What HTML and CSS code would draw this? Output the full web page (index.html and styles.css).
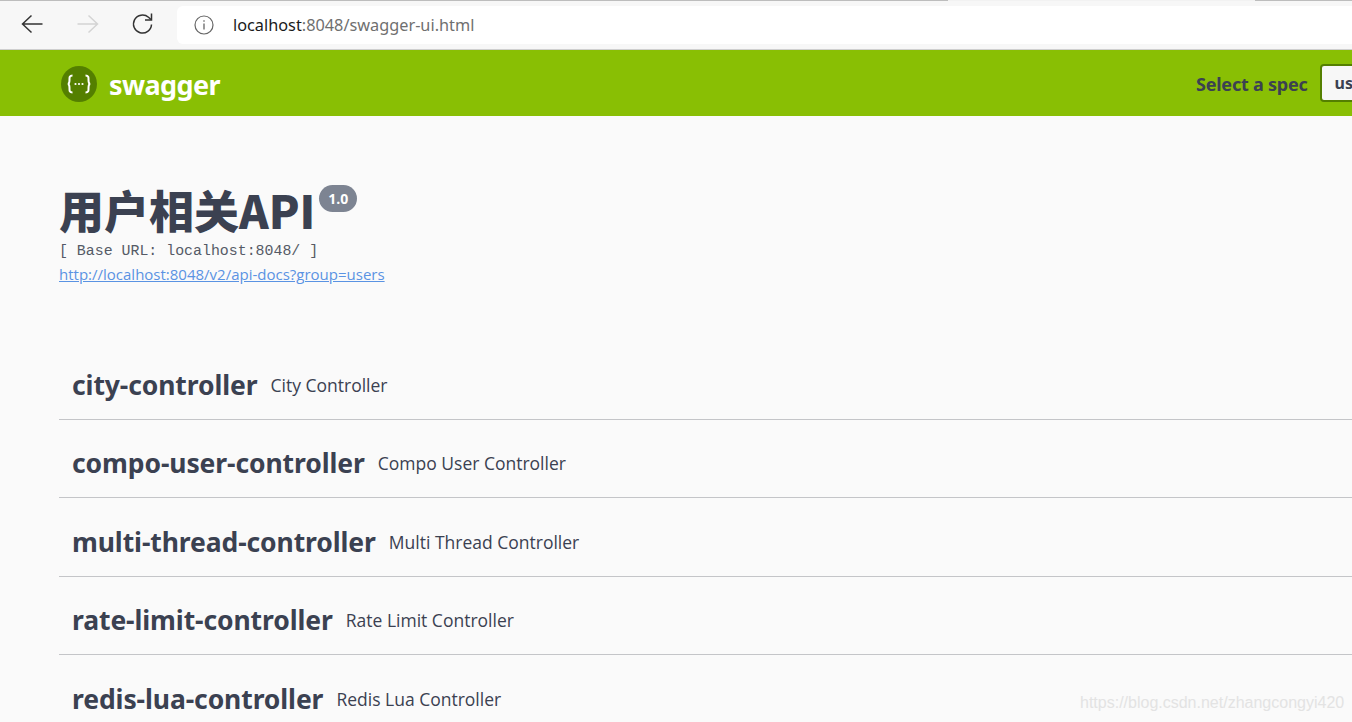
FILE: index.html
```html
<!DOCTYPE html>
<html lang="zh">
<head>
<meta charset="utf-8">
<title>Swagger UI</title>
<link rel="stylesheet" href="styles.css">
</head>
<body>
<div class="tabstrip"><span class="strip-a"></span><span class="strip-b"></span><span class="strip-c"></span></div>
<div class="browser">
  <svg class="nav back" width="24" height="24" viewBox="0 0 24 24"><path d="M22.5 12H2.5M11.5 3.5L2.5 12l9 8.500" fill="none" stroke="#333" stroke-width="1.5"/></svg>
  <svg class="nav fwd" width="24" height="24" viewBox="0 0 24 24"><path d="M1.500 12h20M12.500 3.500l9 8.500-9 8.500" fill="none" stroke="#d4d4d4" stroke-width="1.500"/></svg>
  <svg class="nav reload" width="24" height="24" viewBox="0 0 24 24"><path d="M20.500 12.500a9 9 0 1 1-3-7.200L20 7.500" fill="none" stroke="#333" stroke-width="1.500"/><path d="M20.500 1.500v6.500h-6.500" fill="none" stroke="#333" stroke-width="1.500"/></svg>
  <div class="omnibox">
    <svg class="info" width="20" height="20" viewBox="0 0 20 20"><circle cx="10" cy="10" r="9" fill="none" stroke="#666" stroke-width="1.200"/><path d="M10 8.500v6M10 5.200v1.500" stroke="#666" stroke-width="1.300"/></svg>
    <span class="url"><span class="host">localhost</span>:8048/swagger-ui.html</span>
  </div>
</div>
<header class="topbar">
  <div class="logo">
    <svg width="36" height="36" viewBox="0 0 36 36"><circle cx="18" cy="18" r="18" fill="#547f00"/><path d="M11.500 9.500c-3.500 0-3 2.500-3 4.500s-.5 4-1.800 4c1.300 0 1.800 2 1.800 4s-.5 4.500 3 4.500M24.500 9.500c3.500 0 3 2.500 3 4.500s.5 4 1.800 4c-1.300 0-1.800 2-1.800 4s.5 4.500-3 4.500" fill="none" stroke="#fff" stroke-width="2"/><circle cx="14.500" cy="18" r="1.100" fill="#fff"/><circle cx="18" cy="18" r="1.100" fill="#fff"/><circle cx="21.500" cy="18" r="1.100" fill="#fff"/></svg>
    <span class="brand">swagger</span>
  </div>
  <div class="spec">
    <span class="spec-label">Select a spec</span>
    <span class="spec-select">users</span>
  </div>
</header>
<main class="content">
  <section class="info-block">
    <h1 class="api-title">用户相关API<span class="version">1.0</span></h1>
    <div class="base-url">[ Base URL: localhost:8048/ ]</div>
    <a class="docs-link" href="#">http://localhost:8048/v2/api-docs?group=users</a>
  </section>
  <section class="tags">
    <div class="tag"><span class="tag-name">city-controller</span><span class="tag-desc">City Controller</span></div>
    <div class="tag"><span class="tag-name">compo-user-controller</span><span class="tag-desc">Compo User Controller</span></div>
    <div class="tag"><span class="tag-name">multi-thread-controller</span><span class="tag-desc">Multi Thread Controller</span></div>
    <div class="tag"><span class="tag-name">rate-limit-controller</span><span class="tag-desc">Rate Limit Controller</span></div>
    <div class="tag"><span class="tag-name">redis-lua-controller</span><span class="tag-desc">Redis Lua Controller</span></div>
  </section>
</main>
<div class="watermark">https://blog.csdn.net/zhangcongyi420</div>
</body>
</html>
```
FILE: styles.css
```css
* { box-sizing: border-box; }
html, body { margin: 0; padding: 0; height: 722px; overflow: hidden; }
body { background: #fafafa; font-family: "Open Sans", sans-serif; color: #3b4151; position: relative; }

.tabstrip { display: flex; height: 1px; background: #f2f2f2; }
.strip-a { width: 948px; background: #bdbdbd; }
.strip-b { width: 307px; }
.strip-c { flex: 1; background: #bdbdbd; }

.browser { display: flex; align-items: center; height: 49px; background: #f7f7f7; border-bottom: 1px solid #cfcfcf; padding: 0 0 2px 20px; }
.nav { flex: none; }
.back { margin-right: 32px; }
.fwd { margin-right: 31px; }
.reload { margin-right: 22px; }
.omnibox { flex: 1; display: flex; align-items: center; height: 38px; margin-top: 2px; background: #fff; border-radius: 6px 0 0 6px; padding-left: 17px; }
.info { margin-right: 19px; }
.url { font-family: "Noto Sans", sans-serif; font-size: 16.300px; color: #6f6f6f; }
.host { color: #1a1a1a; }

.topbar { display: flex; align-items: center; justify-content: space-between; height: 66px; background: #89bf04; padding: 2px 0 0 61px; white-space: nowrap; }
.logo { display: flex; align-items: center; gap: 12px; }
.brand { font-family: "Noto Sans", sans-serif; font-weight: 700; font-size: 27px; color: #fff; letter-spacing: -0.6px; margin-top: 1px; }
.spec { display: flex; align-items: center; gap: 12px; width: 156px; overflow: hidden; flex: none; }
.spec-label { font-family: "Noto Sans", sans-serif; font-weight: 700; font-size: 18px; color: #3b4151; letter-spacing: -0.22px; margin-bottom: 1px; }
.spec-select { flex: none; display: flex; align-items: center; width: 120px; height: 38px; margin-bottom: 2px; background: #f7f7f7; border: 2px solid #547f00; border-radius: 4px; padding-left: 13px; font-family: "Noto Sans", sans-serif; font-weight: 700; font-size: 16px; color: #3b4151; }

.content { padding: 0 0 0 59px; }
.info-block { padding-top: 66px; height: 225.400px; }
.api-title { display: flex; align-items: flex-start; margin: 0; height: 56px; font-family: "Noto Sans CJK SC", "Noto Sans", sans-serif; font-weight: 900; font-size: 45px; line-height: 56px; color: #3b4151; white-space: nowrap; }
.version { margin: 3px 0 0 4px; height: 27px; width: 38px; background: #7d8492; border-radius: 57px; font-family: "Open Sans", sans-serif; font-size: 14px; font-weight: 700; line-height: 27px; text-align: center; color: #fff; }
.base-url { margin-top: 3px; font-family: "Liberation Mono", monospace; font-size: 14.900px; line-height: 21px; height: 21px; color: #555a66; }
.docs-link { display: block; margin-top: 1px; font-size: 15px; line-height: 22px; color: #5a93e3; }

.tags { display: flex; flex-direction: column; }
.tag { display: flex; align-items: center; height: 78.500px; padding: 9px 0 0 13px; border-bottom: 1px solid #c4c5c8; white-space: nowrap; }
.tag-name { font-family: "Noto Sans", sans-serif; font-weight: 700; font-size: 26.500px; letter-spacing: -0.1px; color: #3b4151; margin-right: 13px; }
.tag-desc { font-size: 17.500px; color: #3b4151; }

.watermark { position: absolute; left: 1080px; top: 694px; font-family: "Liberation Sans", sans-serif; font-size: 16px; color: #e3e3e3; }
```
